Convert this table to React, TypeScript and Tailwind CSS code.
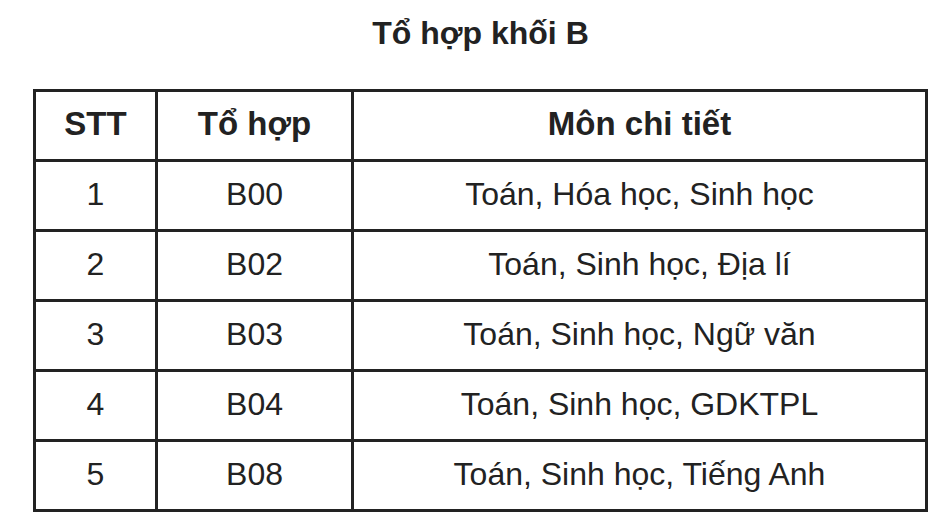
const rows = [
  { stt: "1", code: "B00", mon: "Toán, Hóa học, Sinh học" },
  { stt: "2", code: "B02", mon: "Toán, Sinh học, Địa lí" },
  { stt: "3", code: "B03", mon: "Toán, Sinh học, Ngữ văn" },
  { stt: "4", code: "B04", mon: "Toán, Sinh học, GDKTPL" },
  { stt: "5", code: "B08", mon: "Toán, Sinh học, Tiếng Anh" },
]

export default function App() {
  return (
    <div className="min-h-[522px] bg-white text-[#222] font-['Liberation_Sans',Arial,sans-serif]">
      <div className="ml-[33px] w-[895px] pt-[13px]">
        <h1 className="text-center text-[32px] leading-[40px] font-bold">Tổ hợp khối B</h1>
        <table className="mt-[36px] w-[895px] border-collapse border-[3px] border-[#222] text-[32px] text-center">
          <thead>
            <tr className="h-[70px] text-[33px]">
              <th className="w-[122px] border-[3px] border-[#222] pb-[4px] font-bold">STT</th>
              <th className="w-[196px] border-[3px] border-[#222] pb-[4px] font-bold">Tổ hợp</th>
              <th className="border-[3px] border-[#222] pb-[4px] font-bold">Môn chi tiết</th>
            </tr>
          </thead>
          <tbody>
            {rows.map((r) => (
              <tr key={r.code} className="h-[70px]">
                <td className="border-[3px] border-[#222] pb-[4px]">{r.stt}</td>
                <td className="border-[3px] border-[#222] pb-[4px]">{r.code}</td>
                <td className="border-[3px] border-[#222] pb-[4px]">{r.mon}</td>
              </tr>
            ))}
          </tbody>
        </table>
      </div>
    </div>
  )
}
